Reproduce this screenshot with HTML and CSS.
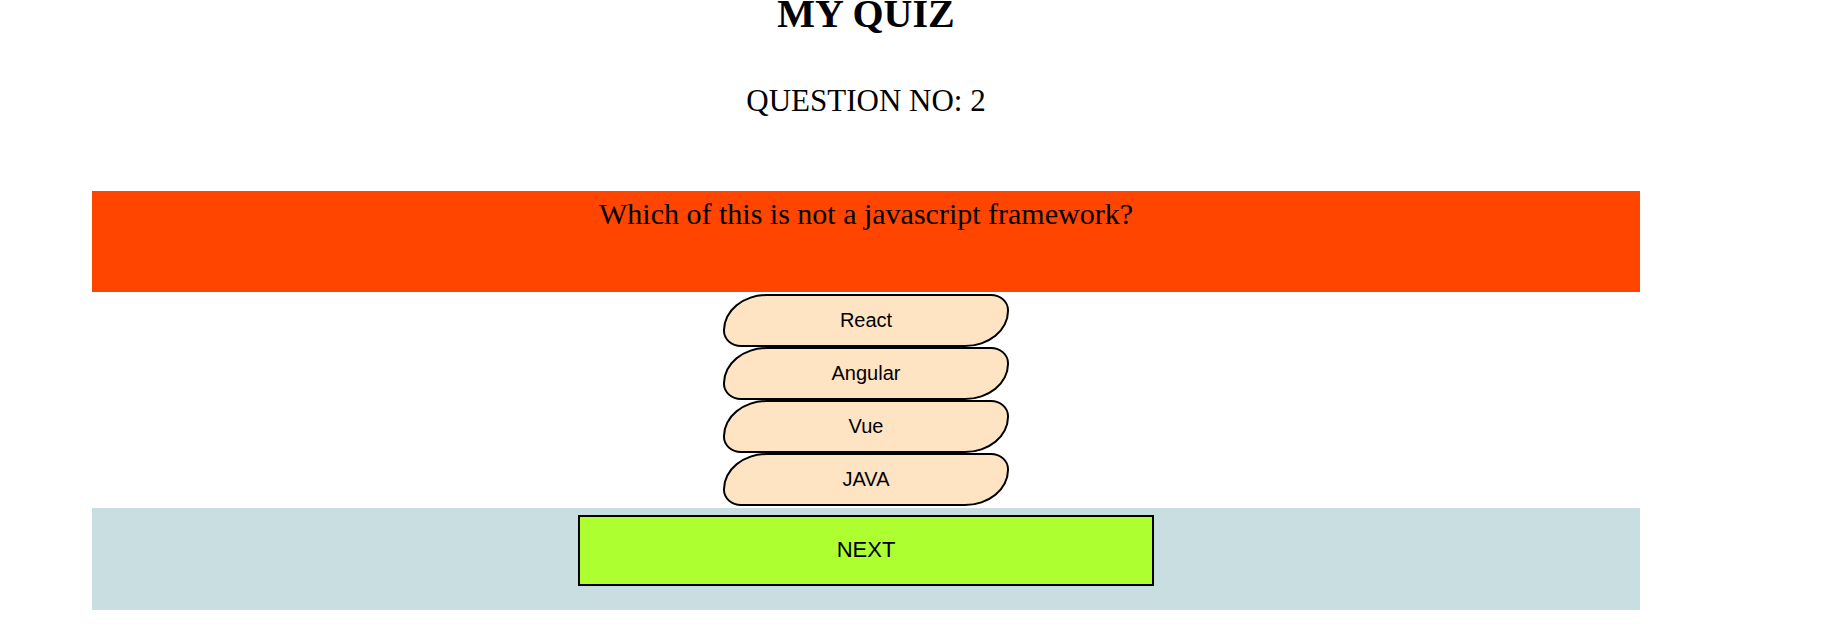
FILE: index.html
```html
<!DOCTYPE html>
<html>
<head>
<meta charset="utf-8">
<title>My Quiz</title>
<link rel="stylesheet" href="styles.css">
</head>
<body>
<div class="quiz">
  <h1 class="title">MY QUIZ</h1>
  <div class="qno">QUESTION NO: 2</div>
  <div class="question">Which of this is not a javascript framework?</div>
  <div class="options">
    <button class="option">React</button>
    <button class="option">Angular</button>
    <button class="option">Vue</button>
    <button class="option">JAVA</button>
  </div>
  <div class="footer">
    <button class="next">NEXT</button>
  </div>
</div>
</body>
</html>
```

FILE: styles.css
```css
html, body {
  margin: 0;
  padding: 0;
  background: #ffffff;
}
body {
  font-family: "Liberation Serif", "Times New Roman", serif;
  color: #000;
  overflow: hidden;
}
.quiz {
  margin-left: 92px;
  width: 1548px;
}
.title {
  margin: -7px 0 0 0;
  font-size: 40px;
  line-height: 41px;
  font-weight: bold;
  text-align: center;
}
.qno {
  margin-top: 49px;
  font-size: 31px;
  line-height: 36px;
  text-align: center;
}
.question {
  margin-top: 72px;
  height: 101px;
  box-sizing: border-box;
  padding-top: 6px;
  background: #ff4500;
  font-size: 30px;
  line-height: 34px;
  text-align: center;
}
.options {
  display: flex;
  flex-direction: column;
  align-items: center;
  padding: 2px 0 2px 0;
}
.option {
  width: 286px;
  height: 53px;
  box-sizing: border-box;
  margin: 0;
  padding: 0;
  border: 2px solid #000;
  border-radius: 44px 18px / 36px 16px;
  background: #ffe4c4;
  font-family: "Liberation Sans", Arial, sans-serif;
  font-size: 20px;
  color: #000;
  text-align: center;
}
.footer {
  height: 102px;
  box-sizing: border-box;
  padding-top: 7px;
  background: #c8dee0;
  display: flex;
  justify-content: center;
  align-items: flex-start;
}
.next {
  width: 576px;
  height: 71px;
  box-sizing: border-box;
  margin: 0;
  padding: 0 0 2px 0;
  border: 2px solid #000;
  background: #adff2f;
  font-family: "Liberation Sans", Arial, sans-serif;
  font-size: 22px;
  color: #000;
}
```
